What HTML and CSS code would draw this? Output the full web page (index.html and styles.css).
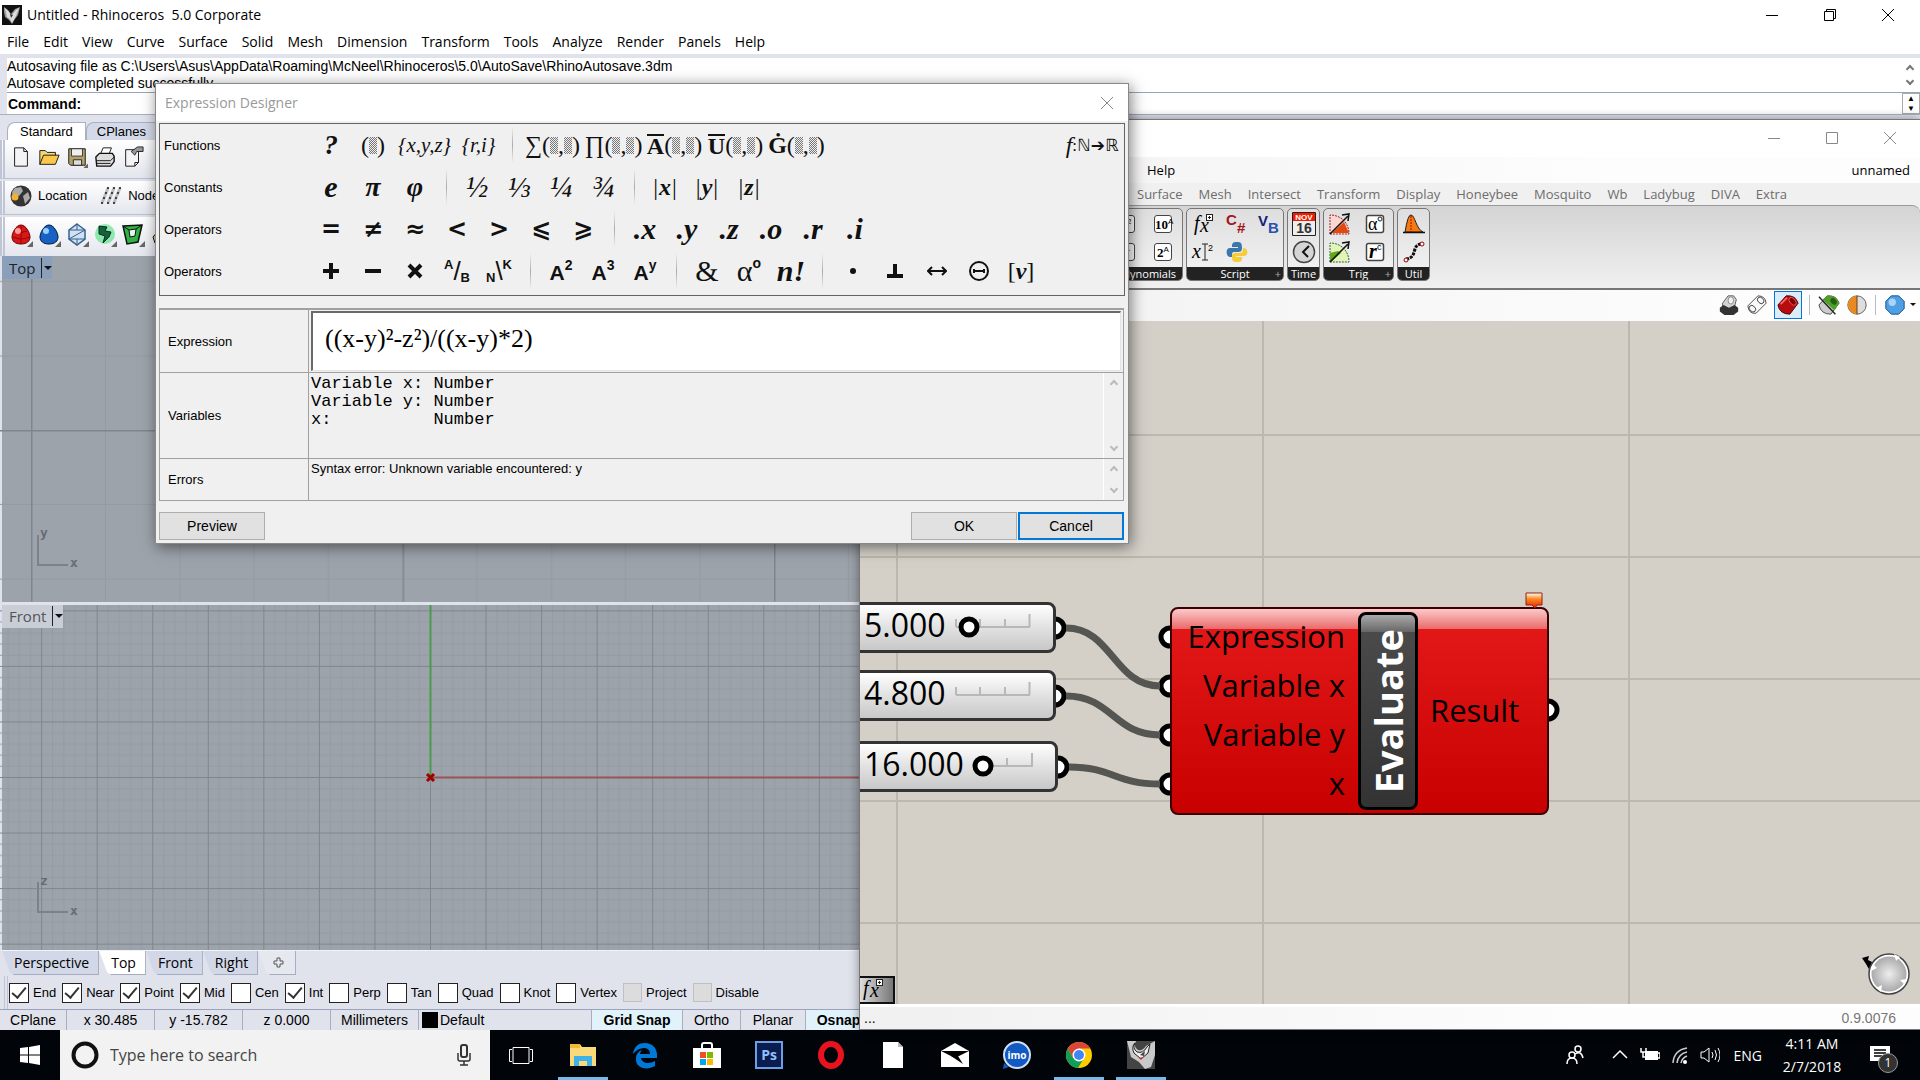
FILE: index.html
```html
<!DOCTYPE html>
<html lang="en">
<head>
    <meta charset="UTF-8">
    <meta name="viewport" content="width=device-width, initial-scale=1.0">
    <title>Untitled - Rhinoceros 5.0 Corporate</title>
    <link rel="stylesheet" href="styles.css">
</head>
<body>
    <div class="desktop">
        <!-- rhino main window -->
        <div class="rhino">
            <div class="titlebar">
                <svg class="appIcon" viewBox="0 0 20 20"><rect width="20" height="20" fill="#111"/><path d="M2 2l4 3 3 4 4-5 5-2-2 8-3 4-3 5-3-4-4-3-1-5z" fill="#999"/><path d="M3 3l4 4 2 4 5-6 3-2-3 8-4 7-2-4-3-2z" fill="#ddd"/><path d="M8 9l3 1-2 3z" fill="#333"/></svg>
                <span>Untitled - Rhinoceros&nbsp; 5.0 Corporate</span>
                <div class="winBtns">
                    <button aria-label="Minimize"><svg viewBox="0 0 12 12"><path d="M0 6.500h12" stroke="#000"/></svg></button>
                    <button aria-label="Restore"><svg viewBox="0 0 12 12"><path d="M.5 2.500h9v9h-9zM2.500 2.500v-2h9v9h-2" fill="none" stroke="#000"/></svg></button>
                    <button aria-label="Close"><svg viewBox="0 0 12 12"><path d="M0 0l12 12M12 0L0 12" stroke="#000"/></svg></button>
                </div>
            </div>
            <ul class="menu">
                <li>File</li><li>Edit</li><li>View</li><li>Curve</li><li>Surface</li><li>Solid</li><li>Mesh</li><li>Dimension</li><li>Transform</li><li>Tools</li><li>Analyze</li><li>Render</li><li>Panels</li><li>Help</li>
            </ul>
            <div class="command">
                <div class="history">
                    <p>Autosaving file as C:\Users\Asus\AppData\Roaming\McNeel\Rhinoceros\5.0\AutoSave\RhinoAutosave.3dm</p>
                    <p>Autosave completed successfully</p>
                    <div class="arrows"><i class="up"></i><i class="down"></i></div>
                </div>
                <div class="prompt">
                    <label for="cmd">Command:</label><input id="cmd" type="text">
                    <div class="spin"><b>▲</b><b>▼</b></div>
                </div>
            </div>
            <div class="toolTabs"><button class="on">Standard</button><button>CPlanes</button></div>
            <div class="toolbar tools">
                <svg viewBox="0 0 24 24"><path d="M5 2h10l4 4v16H5z" fill="#f4f4f4" stroke="#111"/><path d="M15 2v4h4" fill="none" stroke="#111"/></svg>
                <svg viewBox="0 0 24 24"><path d="M2 20V5h6l2 2h9v4" fill="#f7d774" stroke="#111"/><path d="M2 20l4-10h17l-4 10z" fill="#fbc84b" stroke="#111"/></svg>
                <svg viewBox="0 0 24 24"><path d="M3 3h18v18H5l-2-2z" fill="#b3a168" stroke="#111"/><path d="M6 3h12v8H6z" fill="#eee" stroke="#333"/><path d="M8 15h9v6H8z" fill="#ddd" stroke="#222"/><path d="M19 24h5v-5z" fill="#666"/></svg>
                <svg viewBox="0 0 24 24"><path d="M7 9l3-7h9l-3 8z" fill="#fff" stroke="#111"/><path d="M2 12l4-4h14l2 3v6l-4 5H3z" fill="#ddd" stroke="#111" stroke-width="1.500"/><path d="M3 16h15l4-4M3 19h15" fill="none" stroke="#111"/></svg>
                <svg viewBox="0 0 24 24"><path d="M4 4h14v14l-4 4H4z" fill="#f4f4f4" stroke="#111"/><path d="M10 6l7-5h6v5h-7l-2 4z" fill="#999" stroke="#222"/><path d="M14 22v-4h4" fill="none" stroke="#111"/></svg>
            </div>
            <div class="toolbar location">
                <svg viewBox="0 0 24 24"><circle cx="12" cy="12" r="10.500" fill="#333"/><path d="M6 4l6-1 2 4-4 5-3-2-3 4-1-6zM14 12l5-4 2 6-5 6z" fill="#aaa"/><circle cx="6" cy="13" r="3.500" fill="#f2b233"/></svg>
                <span>Location</span>
                <svg viewBox="0 0 24 24" class="node"><path d="M3 19L9 4M9 19l6-15M15 19l6-15" stroke="#bbb" stroke-width="3" fill="none"/><path d="M2 19h2M8 19h2M14 19h2M4 14h2M10 14h2M16 14h2M6 9h2M12 9h2M18 9h2M8 4h2M14 4h2M20 4h2" stroke="#444" stroke-width="2"/></svg>
                <span>Node</span>
            </div>
            <div class="toolbar solids">
                <svg viewBox="0 0 24 24"><path d="M12 2c5 0 9 8 9 12s-3 7-9 7-9-3-9-7S7 2 12 2z" fill="#d81818" stroke="#600"/><path d="M4 14q8 4 17 0M12 3v18M6 8q6 3 12 0" fill="none" stroke="#900"/><circle cx="9" cy="8" r="3" fill="#f99"/><path d="M18 24h6v-6z" fill="#666"/></svg>
                <svg viewBox="0 0 24 24"><path d="M12 2c5 0 9 8 9 12s-3 7-9 7-9-3-9-7S7 2 12 2z" fill="#1661c4" stroke="#013"/><circle cx="9" cy="8" r="3" fill="#9cf"/><path d="M18 24h6v-6z" fill="#666"/></svg>
                <svg viewBox="0 0 24 24"><path d="M12 1l8 6v9l-8 6-8-6V7z" fill="#cfe2f2" stroke="#37618c" stroke-width="1.500"/><path d="M4 7h16L4 16h16M12 1v6M12 16v6" fill="none" stroke="#37618c"/><path d="M18 24h6v-6z" fill="#666"/></svg>
                <svg viewBox="0 0 24 24"><circle cx="12" cy="11" r="10" fill="#4de07c" opacity=".6"/><path d="M6 3l8 1-2 4 6 1-2 5-6 6 2-7-6-2z" fill="#17603a" stroke="#032"/><path d="M18 24h6v-6z" fill="#666"/></svg>
                <svg viewBox="0 0 24 24"><path d="M2 3l19-1-4 17-11 2z" fill="#2eb344" stroke="#111" stroke-width="1.500"/><path d="M8 7l7-1-1 7-5 1z" fill="#e9f5ea" stroke="#111"/><path d="M2 3l6 4M21 2l-6 4" stroke="#111"/><path d="M18 24h6v-6z" fill="#666"/></svg>
                <svg viewBox="0 0 24 24"><path d="M4 14l6-7 10 3-4 10H6z" fill="#e6d27a" stroke="#111"/></svg>
            </div>
            <div class="views">
                <div class="view top">
                    <svg class="grid">
                        <defs>
                            <pattern id="gTop" x="31" y="174" width="371.500" height="371.500" patternUnits="userSpaceOnUse">
                                <path d="M74.500 0v372M149 0v372M223 0v372M297.500 0v372M0 74.500h372M0 149h372M0 223h372M0 297.500h372" stroke="#929aa3"/>
                                <path d="M.5 0v372M0 .5h372" stroke="#7f848d" stroke-width="2"/>
                            </pattern>
                        </defs>
                        <rect width="100%" height="100%" fill="url(#gTop)"/>
                        <path d="M38 279v30h30" fill="none" stroke="#7d818b" stroke-width="2"/>
                        <text x="40" y="281">y</text><text x="70" y="311">x</text>
                    </svg>
                    <button class="viewName active">Top<i></i></button>
                </div>
                <div class="view front">
                    <svg class="grid">
                        <defs>
                            <pattern id="gFront" x="430" y="172" width="55.550" height="55.550" patternUnits="userSpaceOnUse">
                                <path d="M11.600 0v56M22.700 0v56M33.800 0v56M44.900 0v56M0 11.600h56M0 22.700h56M0 33.800h56M0 44.900h56" stroke="#949ba4"/>
                                <path d="M.5 0v56M0 .5h56" stroke="#80858e"/>
                            </pattern>
                        </defs>
                        <rect width="100%" height="100%" fill="url(#gFront)"/>
                        <path d="M430.500 0v172" stroke="#4a9a4a" stroke-width="2"/>
                        <path d="M430 172.500h1490" stroke="#9c5258" stroke-width="2"/>
                        <path d="M427 169l7 7M434 169l-7 7" stroke="#a00000" stroke-width="3"/>
                        <path d="M38 277v30h30" fill="none" stroke="#7d818b" stroke-width="2"/>
                        <text x="40" y="280">z</text><text x="70" y="310">x</text>
                    </svg>
                    <button class="viewName">Front<i></i></button>
                </div>
            </div>
            <div class="viewTabs">
                <button>Perspective</button><button class="on">Top</button><button>Front</button><button>Right</button>
                <button class="add" aria-label="Add viewport"><svg viewBox="0 0 11 11"><path d="M4 1h3v3h3v3H7v3H4V7H1V4h3z" fill="none" stroke="#555"/></svg></button>
            </div>
            <div class="osnap">
                <label><input type="checkbox" checked>End</label>
                <label><input type="checkbox" checked>Near</label>
                <label><input type="checkbox" checked>Point</label>
                <label><input type="checkbox" checked>Mid</label>
                <label><input type="checkbox">Cen</label>
                <label><input type="checkbox" checked>Int</label>
                <label><input type="checkbox">Perp</label>
                <label><input type="checkbox">Tan</label>
                <label><input type="checkbox">Quad</label>
                <label><input type="checkbox">Knot</label>
                <label><input type="checkbox">Vertex</label>
                <label><input type="checkbox" disabled>Project</label>
                <label><input type="checkbox" disabled>Disable</label>
            </div>
            <div class="status">
                <span class="cplane">CPlane</span><span>x 30.485</span><span>y -15.782</span><span>z 0.000</span><span>Millimeters</span>
                <span class="layer"><i></i>Default</span>
                <span class="snap on">Grid Snap</span><span class="ortho">Ortho</span><span class="planar">Planar</span><span class="on osn">Osnap</span>
            </div>
        </div>

        <!-- grasshopper window -->
        <div class="gh">
            <div class="ghTitle">
                <div class="winBtns">
                    <button aria-label="Minimize"><svg viewBox="0 0 12 12"><path d="M0 6.500h12" stroke="#888"/></svg></button>
                    <button aria-label="Maximize"><svg viewBox="0 0 12 12"><path d="M.5.500h11v11H.5z" fill="none" stroke="#888"/></svg></button>
                    <button aria-label="Close"><svg viewBox="0 0 12 12"><path d="M0 0l12 12M12 0L0 12" stroke="#888"/></svg></button>
                </div>
            </div>
            <div class="ghMenu"><span>Help</span><span>unnamed</span></div>
            <ul class="ghTabs">
                <li>Surface</li><li>Mesh</li><li>Intersect</li><li>Transform</li><li>Display</li><li>Honeybee</li><li>Mosquito</li><li>Wb</li><li>Ladybug</li><li>DIVA</li><li>Extra</li>
            </ul>
            <div class="ribbon">
                <div class="group poly">
                    <div class="icons">
                        <b class="key">x<sup>2</sup></b><b class="key">10<sup>A</sup></b>
                        <b class="key">e<sup>-</sup></b><b class="key">2<sup>A</sup></b>
                    </div>
                    <h4>Polynomials</h4>
                </div>
                <div class="group script">
                    <div class="icons">
                        <svg viewBox="0 0 24 24"><text x="3" y="18" class="fx">f</text><text x="9" y="20" class="fx">x</text><rect x="15.500" y="2.500" width="6" height="6" fill="#fff" stroke="#222"/><path d="M18.500 4v3M17 5.500h3" stroke="#222"/></svg>
                        <svg viewBox="0 0 24 24"><text x="1" y="13" class="code red">C</text><text x="12" y="21" class="code red">#</text></svg>
                        <svg viewBox="0 0 24 24"><text x="1" y="14" class="code navy">V</text><text x="11" y="21" class="code blue">B</text></svg>
                        <svg viewBox="0 0 24 24"><text x="1" y="18" class="fx">x</text><path d="M11 4h6M14 4v16M11 20h6" stroke="#222"/><text x="17" y="11" class="tiny">2</text></svg>
                        <svg viewBox="0 0 24 24"><path d="M12 2c-5 0-5 2-5 5h6v1H5c-5 0-4 9 0 9h2c0-5 0-5 4-5s6 0 6-4c0-5-1-6-5-6z" fill="#3b76ad"/><path d="M12 22c5 0 5-2 5-5h-6v-1h8c5 0 4-8 0-8h-1c0 4 0 5-5 5s-6 0-6 4c0 4 1 5 5 5z" fill="#f8cb38"/></svg>
                    </div>
                    <h4>Script<em>+</em></h4>
                </div>
                <div class="group time">
                    <div class="icons">
                        <svg viewBox="0 0 24 24"><path d="M.5.500h23v23H.5z" fill="#eee" stroke="#222"/><path d="M1 1h22v8H1z" fill="#f31c00"/><text x="12" y="8" class="nov">NOV</text><text x="12" y="21" class="day">16</text></svg>
                        <svg viewBox="0 0 24 24"><circle cx="12" cy="12" r="10.500" fill="#d5d5d5" stroke="#444" stroke-width="1.500"/><path d="M17 6l-6 6 5 5" fill="none" stroke="#111" stroke-width="2"/></svg>
                    </div>
                    <h4>Time</h4>
                </div>
                <div class="group trig">
                    <div class="icons">
                        <svg viewBox="0 0 24 24"><path d="M2 22V3c11 0 19 8 19 19z" fill="#fbd5cf" stroke="#922" stroke-dasharray="2 1"/><path d="M4 21l12-11 5 11z" fill="#e04a10"/><path d="M2 22L20 4M14 3l7-1-1 7" fill="none" stroke="#111" stroke-width="1.500"/></svg>
                        <svg viewBox="0 0 24 24"><rect x="3.500" y="3.500" width="17" height="17" rx="2" fill="#fff" stroke="#444" stroke-width="1.500"/><text x="5" y="18" class="keyT">α</text><circle cx="17" cy="7" r="2" fill="none" stroke="#222"/></svg>
                        <svg viewBox="0 0 24 24"><path d="M2 22V3c11 0 19 8 19 19z" fill="#e2f4b8" stroke="#363" stroke-dasharray="2 1"/><path d="M2 22V13l8-2 3 2-10 9z" fill="#62a81d"/><path d="M2 22L20 4M14 3l7-1-1 7" fill="none" stroke="#111" stroke-width="1.500"/></svg>
                        <svg viewBox="0 0 24 24"><rect x="3.500" y="3.500" width="17" height="17" rx="2" fill="#fff" stroke="#444" stroke-width="1.500"/><text x="6" y="18" class="keyT bi">r</text><text x="14" y="10" class="tiny">c</text></svg>
                    </div>
                    <h4>Trig<em>+</em></h4>
                </div>
                <div class="group util">
                    <div class="icons">
                        <svg viewBox="0 0 24 24"><path d="M3 20Q6 2 9 3c4 0 5 14 12 17z" fill="#f57a10" stroke="#222"/><path d="M9 4v16" stroke="#a00" stroke-dasharray="2 1"/><path d="M1 20.500h22" stroke="#111" stroke-width="1.500"/></svg>
                        <svg viewBox="0 0 24 24"><path d="M4 19c12-1 5-14 15-15" fill="none" stroke="#111" stroke-width="3" stroke-dasharray="3 1"/><circle cx="4" cy="20" r="2" fill="#fff" stroke="#900"/><circle cx="20" cy="4" r="2" fill="#fff" stroke="#900"/></svg>
                    </div>
                    <h4>Util</h4>
                </div>
            </div>
            <div class="ghBar">
                <svg viewBox="0 0 24 24"><path d="M5 10l6-8h6l3 4-2 8-6 3-7-2z" fill="#d4d4d4" stroke="#555"/><ellipse cx="14" cy="7" rx="3" ry="4" fill="#f2f2f2" stroke="#888"/><path d="M2 15l4-3 6 3 6-3 4 3v4l-5 4H7l-5-4z" fill="#333"/></svg>
                <svg viewBox="0 0 24 24"><path d="M2 13L13 2q8 0 9 8L11 21q-8 1-9-8z" fill="#f8f8f8" stroke="#444"/><ellipse cx="16" cy="7" rx="3" ry="4" transform="rotate(-45 16 7)" fill="none" stroke="#444"/><ellipse cx="7" cy="16" rx="3" ry="4" transform="rotate(-45 7 16)" fill="none" stroke="#444"/></svg>
                <button class="picked" aria-label="Shaded preview"><svg viewBox="0 0 24 24"><path d="M1 12l9-10q10-1 13 8l-9 12Q3 22 1 12z" fill="#b50d0d" stroke="#400"/><ellipse cx="17" cy="8" rx="3" ry="5" transform="rotate(-40 17 8)" fill="#7c0606" stroke="#e55"/><path d="M4 11l7-7" stroke="#f66" stroke-width="2"/></svg></button>
                <i class="sep"></i>
                <svg viewBox="0 0 24 24"><path d="M1 12l9-10q10-1 13 8l-9 12Q3 22 1 12z" fill="#ccc" stroke="#444"/><path d="M5 6l5-4q10-1 13 8l-5 8z" fill="#4fa028"/><ellipse cx="17" cy="8" rx="3" ry="4" transform="rotate(-40 17 8)" fill="#286010"/><path d="M1 3l18 19" stroke="#222" stroke-width="1.500"/></svg>
                <svg viewBox="0 0 24 24"><circle cx="12" cy="12" r="10" fill="#ddd" stroke="#555"/><path d="M12 2a10 10 0 0 0 0 20z" fill="#e88a21"/><path d="M12 2v20" stroke="#532"/></svg>
                <i class="sep"></i>
                <svg viewBox="0 0 24 24"><path d="M8 2h8l6 6v8l-6 6H8l-6-6V8z" fill="#4f9fe5" stroke="#124a85"/><circle cx="9" cy="9" r="4" fill="#a9d5fb"/></svg>
                <b class="drop"></b>
            </div>
            <div class="canvas">
                <svg class="wires">
                    <g fill="#fff" stroke="#000" stroke-width="5">
                        <circle cx="195" cy="307" r="9"/><circle cx="195" cy="375" r="9"/><circle cx="198" cy="446" r="9"/>
                        <circle cx="310" cy="316" r="9"/><circle cx="310" cy="365" r="9"/><circle cx="310" cy="414" r="9"/><circle cx="310" cy="463" r="9"/>
                        <circle cx="688" cy="389" r="9"/>
                    </g>
                    <path d="M206 307c46 0 48 58 94 58M206 375c46 0 48 39 94 39M209 446c44 0 46 17 91 17" fill="none" stroke="#555551" stroke-width="7"/>
                </svg>
                <div class="slider s1"><span>5.000</span><svg viewBox="0 0 194 50"><path d="M96 24h74M96 16v8M120 16v8M145 16v8M169.500 11v13" stroke="#b8b8b8" stroke-width="2" fill="none"/><circle cx="109" cy="24" r="8" fill="#fff" stroke="#000" stroke-width="5"/></svg></div>
                <div class="slider s2"><span>4.800</span><svg viewBox="0 0 194 50"><path d="M96 24h74M96 16v8M120 16v8M145 16v8M169.500 11v13" stroke="#b8b8b8" stroke-width="2" fill="none"/></svg></div>
                <div class="slider s3"><span>16.000</span><svg viewBox="0 0 194 50"><path d="M125 24h48M147 16v8M172 11v13" stroke="#b8b8b8" stroke-width="2" fill="none"/><circle cx="123" cy="24" r="8" fill="#fff" stroke="#000" stroke-width="5"/></svg></div>
                <svg class="balloon" viewBox="0 0 18 16"><defs><linearGradient id="bal" x2="0" y2="1"><stop offset="0" stop-color="#fff"/><stop offset=".4" stop-color="#fb8a20"/><stop offset="1" stop-color="#f01c00"/></linearGradient></defs><path d="M1 1h16v12h-5l-2 3-3-3H1z" fill="url(#bal)" stroke="#902010"/></svg>
                <div class="evaluate">
                    <div class="inputs"><span>Expression</span><span>Variable x</span><span>Variable y</span><span>x</span></div>
                    <div class="name"><b>Evaluate</b></div>
                    <div class="outputs">Result</div>
                </div>
                <div class="fxTab"><svg viewBox="0 0 24 24"><text x="2" y="17" class="fx">f</text><text x="9" y="19" class="fx">x</text><rect x="15.500" y="1.500" width="6" height="6" fill="#fff" stroke="#222"/><path d="M18.500 3v3M17 4.500h3" stroke="#222"/></svg></div>
                <svg class="compass" viewBox="0 0 50 44"><defs><radialGradient id="cmp"><stop offset="0" stop-color="#eee"/><stop offset="1" stop-color="#aaa"/></radialGradient></defs><path d="M2 6l7-2-1 4 4 2-2 9-4-7z" fill="#000"/><circle cx="29" cy="22" r="20" fill="#fff" stroke="#444" stroke-width="1.500"/><circle cx="29" cy="22" r="17.500" fill="url(#cmp)"/><path d="M34 2l2 7 4-4zM11 19l6-3-4-4zM47 27l-7 1 4 4zM21 40l1-7-6 3z" fill="#fff"/></svg>
            </div>
            <div class="ghStatus"><span>...</span><span class="ver">0.9.0076</span></div>
        </div>

        <!-- expression designer dialog -->
        <div class="dialog">
            <div class="dlgTitle"><span>Expression Designer</span><button aria-label="Close"><svg viewBox="0 0 12 12"><path d="M0 0l12 12M12 0L0 12" stroke="#888"/></svg></button></div>
            <div class="palette">
                <div class="row"><span class="lbl">Functions</span>
                    <button class="bi">?</button><button>(<i class="h"></i>)</button><button class="w3 it">{x,y,z}</button><button class="w2 it">{r,i}</button><i class="sep"></i>
                    <button class="w3">∑(<i class="h"></i>,<i class="h"></i>)</button><button class="w3">∏(<i class="h"></i>,<i class="h"></i>)</button><button class="w3"><b class="over">A</b>(<i class="h"></i>,<i class="h"></i>)</button><button class="w3"><b class="over">U</b>(<i class="h"></i>,<i class="h"></i>)</button><button class="w3"><b>Ġ</b>(<i class="h"></i>,<i class="h"></i>)</button>
                    <button class="map"><em>f</em>:ℕ➔ℝ</button>
                </div>
                <div class="row"><span class="lbl">Constants</span>
                    <button class="bi big">e</button><button class="bi">π</button><button class="bi">φ</button><i class="sep"></i>
                    <button class="frac">½</button><button class="frac">⅓</button><button class="frac">¼</button><button class="frac">¾</button><i class="sep"></i>
                    <button class="abs">|<b>x</b>|</button><button class="abs">|<b>y</b>|</button><button class="abs">|<b>z</b>|</button>
                </div>
                <div class="row"><span class="lbl">Operators</span>
                    <button class="op">=</button><button class="op">≠</button><button class="op">≈</button><button class="op">&lt;</button><button class="op">&gt;</button><button class="op">⩽</button><button class="op">⩾</button><i class="sep"></i>
                    <button class="bi big">.x</button><button class="bi big">.y</button><button class="bi big">.z</button><button class="bi big">.o</button><button class="bi big">.r</button><button class="bi big">.i</button>
                </div>
                <div class="row"><span class="lbl">Operators</span>
                    <button aria-label="Add"><svg viewBox="0 0 20 20"><path d="M10 2v16M2 10h16" stroke="#111" stroke-width="4"/></svg></button>
                    <button aria-label="Subtract"><svg viewBox="0 0 20 20"><path d="M2 10h16" stroke="#111" stroke-width="4"/></svg></button>
                    <button aria-label="Multiply"><svg viewBox="0 0 20 20"><path d="M4 4l12 12M16 4L4 16" stroke="#111" stroke-width="4"/></svg></button>
                    <button class="ab"><sup>A</sup>/<sub>B</sub></button><button class="ab"><sub>N</sub>\<sup>K</sup></button><i class="sep"></i>
                    <button class="pow">A<sup>2</sup></button><button class="pow">A<sup>3</sup></button><button class="pow">A<sup>y</sup></button><i class="sep"></i>
                    <button class="big">&amp;</button><button class="big">α<sup>o</sup></button><button class="bi big">n!</button><i class="sep"></i>
                    <button aria-label="Dot product"><svg viewBox="0 0 20 20"><circle cx="10" cy="10" r="3" fill="#111"/></svg></button>
                    <button aria-label="Perpendicular"><svg viewBox="0 0 20 20"><path d="M10 3v12M2 15h16" stroke="#111" stroke-width="4"/></svg></button>
                    <button aria-label="Distance"><svg viewBox="0 0 20 20"><path d="M1 10h18M5 6l-4 4 4 4M15 6l4 4-4 4" fill="none" stroke="#111" stroke-width="2"/></svg></button>
                    <button aria-label="Angle"><svg viewBox="1 1 20 20"><circle cx="11" cy="11" r="9" fill="none" stroke="#111" stroke-width="2"/><path d="M6 11h10M6 9v4M16 9v4" stroke="#111" stroke-width="2"/></svg></button>
                    <button>[<b><em>v</em></b>]</button>
                </div>
            </div>
            <div class="form">
                <label for="expr">Expression</label>
                <div class="cell"><input id="expr" type="text" value="((x-y)²-z²)/((x-y)*2)"></div>
                <label for="vars">Variables</label>
                <div class="cell"><textarea id="vars" class="mono" readonly>Variable x: Number
Variable y: Number
x:          Number</textarea><div class="arrows"><i class="up"></i><i class="down"></i></div></div>
                <label for="errs">Errors</label>
                <div class="cell"><textarea id="errs" readonly>Syntax error: Unknown variable encountered: y</textarea><div class="arrows"><i class="up"></i><i class="down"></i></div></div>
            </div>
            <div class="btns"><button>Preview</button><button class="ok">OK</button><button class="cancel">Cancel</button></div>
        </div>
    </div>

    <div class="taskbar">
        <button class="start" aria-label="Start"><svg viewBox="0 0 20 20"><path d="M0 3l8-1v7.500H0zM9 2l11-2v9.500H9zM0 10.500h8V18l-8-1zM9 10.500h11V20L9 18z" fill="#fff"/></svg></button>
        <div class="search">
            <svg viewBox="0 0 28 28"><circle cx="14" cy="14" r="11.500" fill="none" stroke="#111" stroke-width="4"/></svg>
            <input type="text" placeholder="Type here to search" aria-label="Type here to search">
            <svg class="mic" viewBox="0 0 16 22"><rect x="5" y="1" width="6" height="12" rx="2" fill="none" stroke="#333" stroke-width="2"/><path d="M2 9v6q0 2 2 2h8q2 0 2-2V9M8 17v4M4 21h8" fill="none" stroke="#333" stroke-width="1.500"/></svg>
        </div>
        <div class="apps">
            <button aria-label="Task view"><svg viewBox="0 0 28 28"><path d="M6 6.500h16v16H6zM5 8.500H2.500v12H5M23 8.500h2.500v12H23" fill="none" stroke="#fff"/></svg></button>
            <button class="open" aria-label="File Explorer"><svg viewBox="0 0 28 28"><path d="M1 3h10l2 3h14v19H1z" fill="#f9d978"/><path d="M1 3h10v4H1z" fill="#f5b834"/><path d="M5 25V15h18v10h-5v-5h-8v5z" fill="#3fb1e8"/></svg></button>
            <button aria-label="Edge"><svg viewBox="0 0 28 28"><path d="M2 13C3 5 8 2 14 2c8 0 13 6 12 15H10c1 6 9 6 14 3v5c-9 5-20 2-19-8 0-4 3-7 6-8-1 1-2 3-2 4h10C19 5 8 5 2 13z" fill="#0078d7"/></svg></button>
            <button aria-label="Store"><svg viewBox="0 0 28 28"><path d="M9 8V4q0-2 2-2h6q2 0 2 2v4" fill="none" stroke="#fff" stroke-width="2"/><path d="M0 7h28v20H0z" fill="#fff"/><path d="M7 11h6v6H7z" fill="#f25022"/><path d="M14 11h6v6h-6z" fill="#7fba00"/><path d="M7 18h6v6H7z" fill="#00a4ef"/><path d="M14 18h6v6h-6z" fill="#ffb900"/></svg></button>
            <button aria-label="Photoshop"><svg viewBox="0 0 28 28"><path d="M1 1h26v26H1z" fill="#0b1d4e" stroke="#6d9ee8" stroke-width="2"/><text x="14" y="19" class="ps">Ps</text></svg></button>
            <button aria-label="Opera"><svg viewBox="0 0 28 28"><ellipse cx="14" cy="14" rx="10" ry="11" fill="none" stroke="#e8131f" stroke-width="6"/></svg></button>
            <button aria-label="Document"><svg viewBox="0 0 28 28"><path d="M4 1h15l5 5v21H4z" fill="#fff"/><path d="M19 1v5h5" fill="#bbb"/></svg></button>
            <button aria-label="Mail"><svg viewBox="0 0 28 28"><path d="M0 10L14 2l14 8v16H0z" fill="#fff"/><path d="M0 10h28L14 17z" fill="#000"/><path d="M10 15l12 8-5-8z" fill="#000"/></svg></button>
            <button aria-label="imo"><svg viewBox="0 0 28 28"><circle cx="14" cy="14" r="13" fill="#1259c3" stroke="#cfe0f5" stroke-width="2"/><path d="M1 22l-1 6 6-2z" fill="#1259c3"/><text x="14" y="18" class="imo">imo</text></svg></button>
            <button class="open" aria-label="Chrome"><svg viewBox="0 0 28 28"><circle cx="14" cy="14" r="13" fill="#fc0"/><path d="M2.700 7.500A13 13 0 0 1 25.300 7.500H14L8 17z" fill="#db4437"/><path d="M2.700 7.500A13 13 0 0 0 13 27l6-10-11 0z" fill="#0f9d58"/><circle cx="14" cy="14" r="6.500" fill="#fff"/><circle cx="14" cy="14" r="5" fill="#4285f4"/></svg></button>
            <button class="open" aria-label="Rhinoceros"><svg viewBox="0 0 28 28"><path d="M0 0h28v28H0z" fill="#444"/><path d="M0 0h9q-3 6 2 9 5 1 8-4l9-5v14l-4 12-6 2-6-7-8-5z" fill="#c9c9c9"/><path d="M8 2q-3 5 2 9 6 2 10-5l3-3-2 9-7 6-7-6q-3-6 1-10z" fill="#eee" stroke="#222"/><path d="M13 14l5-4-1 5z" fill="#444"/><path d="M12 17l4-1-2 3z" fill="#d22"/></svg></button>
        </div>
        <div class="tray">
            <svg viewBox="0 0 20 20" class="people"><circle cx="13" cy="4" r="3" fill="none" stroke="#fff" stroke-width="1.500"/><circle cx="7" cy="10" r="3" fill="none" stroke="#fff" stroke-width="1.500"/><path d="M2 19q0-6 5-6t5 6M10 9q6-4 8 4" fill="none" stroke="#fff" stroke-width="1.500"/></svg>
            <svg viewBox="0 0 20 20"><path d="M3 13l7-7 7 7" fill="none" stroke="#fff" stroke-width="1.500"/></svg>
            <svg viewBox="0 0 20 20"><path d="M5 6h13v9H5z" fill="#fff"/><path d="M18 8h2v5h-2M1 3v4h5V3M3 7v5h3" fill="none" stroke="#fff" stroke-width="1.500"/></svg>
            <svg viewBox="0 0 20 20"><path d="M3 18Q4 5 17 3M7 18q1-9 10-11M11 18q1-5 6-7" fill="none" stroke="#ccc" stroke-width="1.500"/><circle cx="15" cy="17" r="2" fill="#fff"/></svg>
            <svg viewBox="0 0 20 20"><path d="M1 7h3l5-4v14l-5-4H1zM12 7q2 3 0 6M15 5q3 5 0 10M18 3q4 7 0 14" fill="none" stroke="#fff"/></svg>
            <span class="lang">ENG</span>
            <div class="clock"><span>4:11 AM</span><span>2/7/2018</span></div>
            <div class="notes"><svg viewBox="0 0 20 20"><path d="M0 1h20v15h-6l-4 4v-4H0z" fill="#fff"/><path d="M4 5h12M4 8h12M4 11h8" stroke="#000" stroke-width="1.500"/></svg><b>1</b></div>
        </div>
    </div>
</body>
</html>
```

FILE: styles.css
```css
*{
    margin: 0;
    padding: 0;
    box-sizing: border-box;
    list-style: none;
}
body{
    height: 100vh;
    display: flex;
    flex-direction: column;
    overflow: hidden;
    font: 14px "Liberation Sans",Arial,sans-serif;
    color: #000;
}
button,input,textarea{
    font: inherit;
    color: inherit;
    border: 0;
    background: none;
    border-radius: 0;
    resize: none;
    outline: 0;
}
svg{
    display: block;
    flex: none;
}
.desktop{
    flex: 1;
    min-height: 0;
    position: relative;
}

/* rhino */
.rhino{
    height: 100%;
    display: flex;
    flex-direction: column;
    background: #e0e3ec;
}
.titlebar{
    height: 29px;
    display: flex;
    align-items: center;
    background: #fff;
    font: 14px "Open Sans",sans-serif;
    padding-left: 2px;
}
.appIcon{
    width: 20px;
    height: 20px;
    margin-right: 5px;
}
.winBtns{
    margin-left: auto;
    display: flex;
}
.winBtns button{
    width: 58px;
    height: 28px;
    display: flex;
    align-items: center;
    justify-content: center;
}
.winBtns svg{
    width: 12px;
    height: 12px;
}
.titlebar .winBtns{
    padding-right: 3px;
}
.menu{
    height: 25px;
    display: flex;
    align-items: center;
    gap: 14px;
    padding-left: 7px;
    background: #fff;
    font: 14px "Open Sans",sans-serif;
}
.command{
    margin-top: 4px;
    padding-left: 7px;
    border-bottom: 1px solid #aab0c4;
}
.history{
    height: 34px;
    position: relative;
    background: #fff;
}
.history p{
    line-height: 17px;
    white-space: nowrap;
}
.prompt{
    height: 22px;
    display: flex;
    align-items: center;
    font-weight: bold;
    background: #fff;
    border-top: 1px solid #9aa3bb;
    padding-left: 1px;
}
.prompt input{
    flex: 1;
}
.spin{
    width: 18px;
    height: 100%;
    display: flex;
    flex-direction: column;
    border: 1px solid #aaa;
}
.spin b{
    flex: 1;
    font-size: 8px;
    line-height: 10px;
    text-align: center;
}
.arrows{
    position: absolute;
    right: 0;
    top: 0;
    bottom: 0;
    width: 20px;
    display: flex;
    flex-direction: column;
    justify-content: space-between;
    align-items: center;
    padding: 8px 0;
}
.arrows i{
    width: 6px;
    height: 6px;
    border: solid #777;
    border-width: 2px 0 0 2px;
    transform: rotate(45deg);
}
.arrows .down{
    transform: rotate(225deg);
}
.toolTabs{
    height: 25px;
    display: flex;
    padding: 7px 0 0 7px;
    font-size: 13px;
}
.toolTabs button{
    padding: 0 12px;
    background: #d3d9e8;
    border: 1px solid #a9b0c4;
    border-bottom: 0;
    border-radius: 8px 0 0 0;
}
.toolTabs .on{
    background: #fff;
}
.toolTabs button + button{
    padding: 0 10px;
}
.toolbar{
    display: flex;
    align-items: center;
    background: linear-gradient(#fff,#e4e6ee);
    border-left: 5px double #c0c5d4;
    border-bottom: 1px solid #bcc1d2;
    padding-left: 2px;
    font-size: 13px;
}
.toolbar svg{
    width: 24px;
    height: 24px;
    margin: 0 2px;
}
.tools{
    height: 39px;
    padding-bottom: 5px;
}
.tools svg{
    width: 22px;
    height: 22px;
    margin: 0 3px;
}
.location{
    height: 34px;
    margin-top: 2px;
    padding-bottom: 4px;
}
.location span{
    margin-left: 3px;
}
.location .node{
    margin-left: 12px;
}
.solids{
    height: 39px;
    margin-top: 2px;
    padding-bottom: 4px;
    border-bottom: 0;
}
.views{
    flex: 1;
    min-height: 0;
    display: flex;
    flex-direction: column;
    gap: 3px;
    border-left: 2px solid #dfe2ec;
    border-bottom: 1px solid #f2f3f8;
}
.view{
    flex: 1;
    min-height: 0;
    position: relative;
    background: #9da3ab;
}
.grid{
    position: absolute;
    left: -2px;
    top: 0;
    width: calc(100% + 2px);
    height: 100%;
}
.grid text{
    font: bold 13px "DejaVu Sans Mono",monospace;
    fill: #686b73;
}
.viewName{
    position: relative;
    height: 23px;
    display: flex;
    align-items: center;
    padding-left: 7px;
    gap: 6px;
    background: #c9cdd6;
    color: #555;
    font: 15px "Open Sans",sans-serif;
}
.viewName i{
    height: 20px;
    width: 11px;
    border-left: 1px solid #222;
    display: flex;
    align-items: center;
}
.viewName i::after,
.drop{
    content: '';
    margin-left: 2px;
    border: 4px solid transparent;
    border-top: 4px solid #111;
    border-bottom: 0;
}
.viewName.active{
    background: #8a9fba;
    color: #222;
}
.viewTabs{
    height: 25px;
    display: flex;
    padding-left: 2px;
    font: 14px "Open Sans",sans-serif;
}
.viewTabs button{
    height: 24px;
    padding: 0 9px 0 12px;
    background: #d2d8e8;
    border-right: 1px solid #a7aec2;
    clip-path: polygon(0 0,100% 0,100% 100%,12px 100%,8px 90%);
    border-bottom: 1px solid #a7aec2;
    font: inherit;
}
.viewTabs .on{
    background: #fff;
}
.viewTabs .add{
    background: #e6e8ef;
    width: 38px;
    padding-left: 15px;
}
.viewTabs svg{
    width: 11px;
    height: 11px;
}
.osnap{
    height: 33px;
    display: flex;
    align-items: center;
    gap: 6px;
    margin-left: 4px;
    padding-left: 1px;
    border-left: 4px double #c0c5d4;
    font-size: 13px;
}
.osnap label{
    display: flex;
    align-items: center;
    gap: 4px;
}
.osnap input{
    appearance: none;
    width: 20px;
    height: 20px;
    background: #fff;
    border: 1px solid #222;
    display: flex;
    align-items: center;
    justify-content: center;
}
.osnap input:checked::after{
    content: '';
    width: 12px;
    height: 6px;
    border: solid #333;
    border-width: 0 0 2px 2px;
    transform: translateY(-2px) rotate(-50deg);
}
.osnap input:disabled{
    width: 19px;
    height: 19px;
    background: #dcdcdc;
    border-color: #c0c0c0;
}
.status{
    height: 21px;
    display: flex;
    border-top: 1px solid #9aa3bb;
}
.status span{
    width: 88px;
    line-height: 20px;
    text-align: center;
    border-right: 1px solid #a7aec2;
}
.status .cplane{
    width: 67px;
}
.status .layer{
    width: 173px;
    display: flex;
    gap: 2px;
    padding: 2px 3px;
    line-height: 16px;
}
.layer i{
    width: 16px;
    background: #000;
}
.status .on{
    width: 91px;
    background: #e2f2fb;
    font-weight: bold;
}
.status .ortho{
    width: 58px;
}
.status .planar{
    width: 65px;
}
.status .osn{
    width: 66px;
}

/* grasshopper */
.gh{
    position: absolute;
    left: 859px;
    top: 119px;
    right: 0;
    bottom: 0;
    display: flex;
    flex-direction: column;
    background: #f0f0f0;
    border: 1px solid #777;
    border-right: 0;
    box-shadow: 0 0 10px rgba(0,0,0,.4);
}
.ghTitle{
    height: 37px;
    background: #fff;
}
.ghTitle .winBtns{
    justify-content: flex-end;
    height: 36px;
    padding-right: 1px;
}
.ghTitle button{
    height: 36px;
}
.ghMenu{
    height: 26px;
    display: flex;
    align-items: center;
    justify-content: space-between;
    padding: 0 10px 0 287px;
    background: linear-gradient(90deg,#f0f0f0,#fdfdfd 70%);
    font: 13px "Open Sans",sans-serif;
}
.ghTabs{
    height: 22px;
    display: flex;
    align-items: center;
    gap: 16px;
    padding-left: 277px;
    color: #6d6d6d;
    font: 13px "Open Sans",sans-serif;
}
.ribbon{
    height: 85px;
    display: flex;
    gap: 3px;
    padding: 2px 0 0 247px;
    border-top: 1px solid #999;
    border-bottom: 2px solid #777;
    border-radius: 0 8px 0 0;
    background: linear-gradient(#d4d4d4,#f0f0f0);
}
.group{
    height: 73px;
    border: 1px solid #777;
    border-radius: 5px;
    background: linear-gradient(#dedede,#f4f4f4);
    overflow: hidden;
}
.icons{
    height: 58px;
    display: grid;
    grid-template-columns: 36px 38px;
    grid-template-rows: 28px 28px;
    place-items: center;
    padding-top: 1px;
}
.icons svg{
    width: 24px;
    height: 24px;
    overflow: visible;
}
.script .icons{
    grid-template-columns: 32px 36px 28px;
}
.time .icons{
    grid-template-columns: 31px;
}
.trig .icons{
    grid-template-columns: 32px 37px;
}
.util .icons{
    grid-template-columns: 31px;
}
.group h4{
    height: 14px;
    background: #222;
    color: #fff;
    font: 11px/13px "Open Sans",sans-serif;
    text-align: center;
    position: relative;
}
.group em{
    position: absolute;
    right: 2px;
    font-style: normal;
    color: #aaa;
}
.key{
    width: 18px;
    height: 18px;
    border: 1px solid #444;
    border-radius: 3px;
    background: #fff;
    font: bold 13px/18px "Liberation Serif",serif;
    text-align: center;
    white-space: nowrap;
}
.key sup{
    font: 8px "Liberation Sans",sans-serif;
}
.fx{
    font: italic 20px "Liberation Serif",serif;
}
.code{
    font: bold 15px "Liberation Sans",sans-serif;
}
.red{
    fill: #a31621;
}
.navy{
    fill: #12217a;
}
.blue{
    fill: #2a50b0;
}
.tiny{
    font: 9px "Liberation Sans",sans-serif;
}
.nov{
    font: bold 8px "Liberation Sans",sans-serif;
    fill: #fff;
    text-anchor: middle;
}
.day{
    font: bold 14px "Liberation Sans",sans-serif;
    fill: #333;
    text-anchor: middle;
}
.keyT{
    font: 18px "Liberation Serif",serif;
}
.keyT.bi{
    font: italic bold 20px "Liberation Serif",serif;
}
.ghBar{
    height: 31px;
    display: flex;
    align-items: center;
    justify-content: flex-end;
    gap: 6px;
    padding: 0 4px 2px 0;
    background: linear-gradient(90deg,#f0f0f0,#fff);
}
.ghBar svg{
    width: 22px;
    height: 22px;
}
.picked{
    width: 28px;
    height: 28px;
    padding: 2px;
    border: 1px solid #0078d7;
    background: #dcecf8;
}
.ghBar .sep{
    height: 20px;
    border-left: 1px solid #bbb;
    margin: 0 2px 0 1px;
}
.ghBar .drop{
    margin: 0 0 0 -2px;
    border-width: 3px 3px 0;
}
.canvas{
    flex: 1;
    min-height: 0;
    position: relative;
    overflow: hidden;
    background:
        repeating-linear-gradient(90deg,#bcb8ae 0 2px,transparent 2px 366px) 36px 0,
        linear-gradient(#bcb8ae 2px,transparent 2px) 0 113px / 100% 122px,
        #d4d0c8;
    font: 32px "Open Sans",sans-serif;
}
.wires{
    position: absolute;
    width: 100%;
    height: 100%;
}
.slider{
    position: absolute;
    left: -10px;
    width: 206px;
    height: 51px;
    border: 3px solid #333;
    border-radius: 8px;
    background: linear-gradient(#fff,#e4e4e4 45%,#c8c8c8);
}
.slider span{
    position: relative;
    display: block;
    padding-left: 11px;
    line-height: 40px;
}
.slider svg{
    position: absolute;
    left: 7px;
    top: -2px;
    width: 194px;
    height: 50px;
}
.s1{
    top: 281px;
}
.s2{
    top: 349px;
}
.s3{
    top: 420px;
    width: 208px;
}
.balloon{
    position: absolute;
    left: 665px;
    top: 271px;
    width: 18px;
    height: 16px;
    z-index: 1;
}
.evaluate{
    position: absolute;
    left: 310px;
    top: 286px;
    width: 379px;
    height: 208px;
    display: flex;
    padding: 3px 0;
    border: 2px solid #3a0000;
    border-radius: 8px;
    background: linear-gradient(#fbc9c9,#ea6a6a 20px,#e21818 20px,#c80000);
    font-size: 31px;
}
.inputs{
    width: 173px;
    display: flex;
    flex-direction: column;
    align-items: flex-end;
    padding-top: 2px;
}
.inputs span{
    height: 49px;
    line-height: 44px;
}
.name{
    width: 60px;
    margin-left: 13px;
    display: flex;
    align-items: center;
    justify-content: center;
    border: 3px solid #000;
    border-radius: 8px;
    background: linear-gradient(#aaa,#666 17px,#4a4a4a 17px,#333);
    color: #fff;
    font-size: 38px;
    line-height: 54px;
}
.name b{
    writing-mode: vertical-rl;
    transform: rotate(180deg);
}
.outputs{
    padding-left: 12px;
    line-height: 196px;
}
.fxTab{
    position: absolute;
    left: 0;
    bottom: 0;
    width: 35px;
    height: 28px;
    border: 2px solid #111;
    border-left: 0;
    background: linear-gradient(90deg,#ddd,#777);
}
.fxTab svg{
    width: 26px;
    height: 24px;
    overflow: visible;
}
.compass{
    position: absolute;
    right: 10px;
    bottom: 8px;
    width: 50px;
    height: 44px;
}
.ghStatus{
    height: 25px;
    border-top: 3px solid #fff;
    display: flex;
    align-items: center;
    justify-content: space-between;
    padding: 0 24px 0 4px;
    background: linear-gradient(90deg,#f0f0f0,#fdfdfd 70%);
}
.ver{
    color: #777;
}

/* dialog */
.dialog{
    position: absolute;
    left: 155px;
    top: 83px;
    width: 974px;
    padding-bottom: 3px;
    background: #f0f0f0;
    border: 1px solid #888;
    box-shadow: 2px 3px 14px rgba(0,0,0,.5);
}
.dlgTitle{
    height: 37px;
    display: flex;
    align-items: center;
    justify-content: space-between;
    padding: 0 15px 0 9px;
    background: #fff;
    color: #999;
    font: 14px "Open Sans",sans-serif;
}
.dlgTitle svg{
    width: 12px;
    height: 12px;
}
.palette{
    margin: 2px 3px 0;
    border: 1px solid #646464;
}
.row{
    height: 42px;
    display: flex;
    align-items: center;
    padding: 0 4px;
}
.row:last-child{
    height: 45px;
    padding-bottom: 3px;
}
.lbl{
    width: 146px;
    font-size: 13px;
}
.row button{
    width: 42px;
    height: 40px;
    display: flex;
    align-items: center;
    justify-content: center;
    font: 24px "Liberation Serif",serif;
    white-space: nowrap;
    color: #111;
}
.row svg{
    width: 20px;
    height: 20px;
}
.row .w3{
    width: 61px;
}
.row .w2{
    width: 47px;
}
.row .sep{
    width: 1px;
    height: 36px;
    margin: 0 9px 0 10px;
    background: linear-gradient(transparent,#aaa,transparent);
}
.h{
    width: 8px;
    height: 17px;
    background: repeating-conic-gradient(#777 0 25%,#eee 0 50%) 0 0 / 2px 2px;
}
.over{
    border-top: 2px solid #111;
    line-height: 20px;
}
.row .it{
    font-style: italic;
    font-size: 21px;
}
.row .bi{
    font-style: italic;
    font-weight: bold;
    font-size: 28px;
}
.row .big{
    font-size: 30px;
}
.big sup{
    font: bold 14px "Liberation Sans",sans-serif;
    align-self: flex-start;
    padding-top: 4px;
}
.row .frac{
    font-style: italic;
    font-size: 30px;
}
.row .abs{
    gap: 1px;
}
.abs b{
    font-style: italic;
}
.row .op{
    font: bold 24px "DejaVu Sans",sans-serif;
}
.row .pow,
.row .ab{
    font: bold 21px "Liberation Sans",sans-serif;
}
.pow sup{
    font-size: 14px;
    padding-bottom: 16px;
}
.row .pow{
    padding-top: 4px;
}
.row .ab{
    font-weight: normal;
    font-size: 26px;
}
.ab sup,
.ab sub{
    font-size: 13px;
    font-weight: bold;
}
.ab sup{
    padding-bottom: 13px;
}
.ab sub{
    padding-top: 13px;
}
.row .map{
    width: 56px;
    margin-left: auto;
    font: 17px "Liberation Serif","DejaVu Sans",serif;
}
.map em{
    font-size: 24px;
}
.form{
    margin: 12px 4px 0 3px;
    display: grid;
    grid-template-columns: 149px 1fr;
    grid-template-rows: 63px 86px 41px;
    border: 1px solid #a0a0a0;
    border-top: 2px solid #a0a0a0;
}
.form label{
    display: flex;
    align-items: center;
    padding-left: 8px;
    font-size: 13px;
    border-right: 1px solid #a0a0a0;
    border-bottom: 1px solid #a0a0a0;
}
.cell{
    position: relative;
    display: flex;
    padding: 1px;
    border-bottom: 1px solid #a0a0a0;
}
.form > :nth-last-child(-n+2){
    border-bottom: 0;
}
.cell input{
    flex: 1;
    margin: 0 1px;
    padding: 0 0 5px 12px;
    background: #fff;
    border: 1px solid #e3e3e3;
    border-top: 2px solid #696969;
    border-left: 2px solid #696969;
    font: 26px "Liberation Serif",serif;
}
.cell textarea{
    flex: 1;
    padding: 1px 0 0 1px;
    overflow: hidden;
    font-size: 13px;
}
.cell .mono{
    font: 17px/18px "Liberation Mono",monospace;
}
.cell .arrows{
    border-left: 1px solid #fff;
}
.cell .arrows i{
    border-color: #bbb;
}
.btns{
    display: flex;
    margin: 11px 4px 0 3px;
    gap: 1px;
}
.btns button{
    width: 106px;
    height: 28px;
    background: #e1e1e1;
    border: 1px solid #adadad;
}
.btns .ok{
    margin-left: auto;
}
.btns .cancel{
    border: 2px solid #0078d7;
}

/* taskbar */
.taskbar{
    height: 50px;
    display: flex;
    background: #010409;
    color: #fff;
    font: 14px "Open Sans",sans-serif;
}
.start{
    width: 60px;
    display: flex;
    align-items: center;
    justify-content: center;
}
.start svg{
    width: 20px;
    height: 20px;
}
.search{
    width: 430px;
    display: flex;
    align-items: center;
    gap: 11px;
    padding: 0 18px 0 11px;
    background: #f2f2f2;
    color: #333;
    font-size: 16px;
}
.search svg{
    width: 28px;
    height: 28px;
}
.search input{
    flex: 1;
}
.search input::placeholder{
    color: #444;
}
.search .mic{
    width: 16px;
    height: 22px;
}
.apps{
    display: flex;
}
.apps button{
    width: 62px;
    display: flex;
    align-items: center;
    justify-content: center;
}
.apps svg{
    width: 28px;
    height: 28px;
}
.apps .open{
    background: linear-gradient(#76b9ed,#76b9ed) center bottom / 50px 3px no-repeat;
}
.ps{
    font: bold 14px "Open Sans",sans-serif;
    fill: #8fc0ff;
    text-anchor: middle;
}
.imo{
    font: bold 10px "Open Sans",sans-serif;
    fill: #fff;
    text-anchor: middle;
}
.tray{
    margin-left: auto;
    display: flex;
    align-items: center;
    gap: 10px;
    padding-right: 30px;
}
.tray svg{
    width: 20px;
    height: 20px;
}
.tray .people{
    margin-right: 15px;
}
.clock{
    width: 72px;
    display: flex;
    flex-direction: column;
    align-items: center;
    line-height: 23px;
}
.lang{
    margin: 0 4px;
}
.notes{
    position: relative;
    margin-left: 12px;
}
.notes b{
    position: absolute;
    left: 8px;
    top: 8px;
    width: 20px;
    height: 20px;
    border: 1px solid #999;
    border-radius: 50%;
    background: #333;
    font: 12px/18px "Open Sans",sans-serif;
    text-align: center;
}
```
